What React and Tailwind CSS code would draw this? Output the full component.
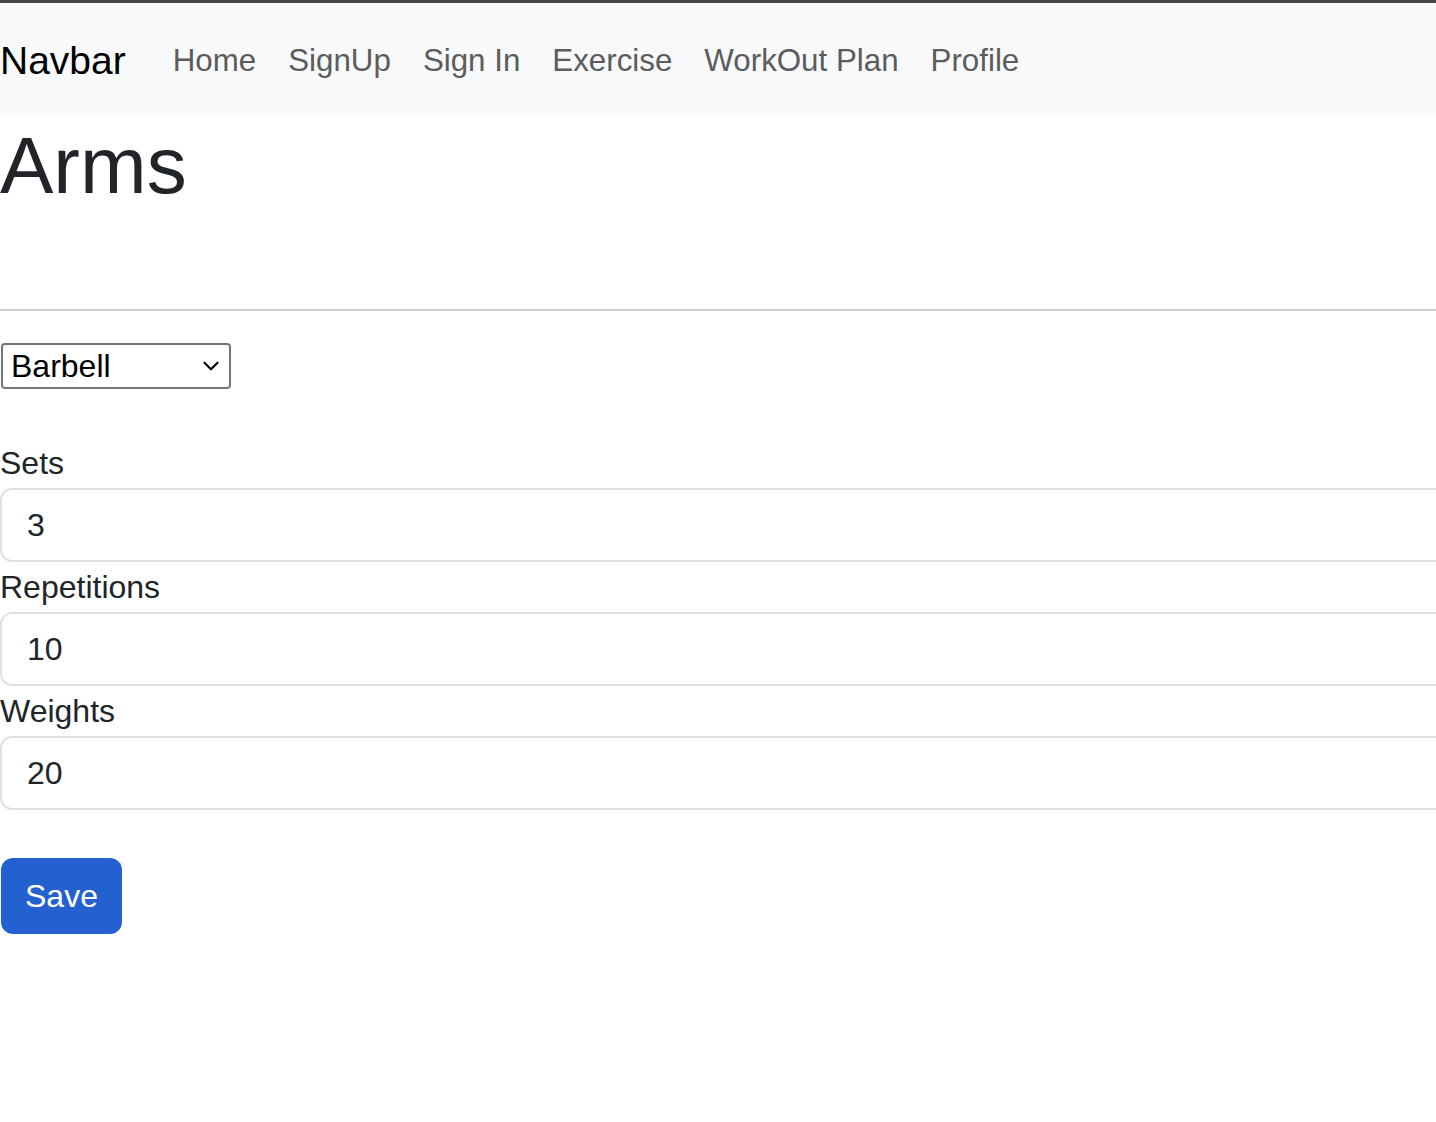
import { ChevronDown } from 'lucide-react';

const links = ['Home', 'SignUp', 'Sign In', 'Exercise', 'WorkOut Plan', 'Profile'];

// ── Labelled number field ──────────────────────────────────────────────────
const Field = ({ label, value }) => (
  <div>
    <label className="block text-[32px] leading-[50px] text-[#212529]">{label}</label>
    <div className="w-[1500px] h-[74px] border-2 border-[#dee2e6] rounded-[12px] bg-white flex items-center pl-[25px] text-[32px] text-[#212529]">
      {value}
    </div>
  </div>
);

export default function App() {
  return (
    <div
      className="w-[1436px] min-h-[1122px] overflow-hidden bg-white"
      style={{ fontFamily: '"Liberation Sans", Arial, sans-serif' }}
    >
      <div className="h-[3px] bg-[#45474a]" />

      {/* Navbar */}
      <nav className="h-[112px] bg-[#f8f9fa] flex items-center pt-[4px]">
        <span className="text-[39px] text-black mr-[31px]">Navbar</span>
        <div className="flex">
          {links.map((l) => (
            <span key={l} className="px-[16px] text-[31.3px] text-[#5c5c5c]">
              {l}
            </span>
          ))}
        </div>
      </nav>

      <h1 className="text-[80px] leading-[96px] font-medium text-[#212529] pt-[3px] mb-[95px]">Arms</h1>

      <hr className="border-0 h-[2px] bg-[#cfcfcf]" />

      {/* Equipment select */}
      <div className="mt-[32px] ml-[1px] w-[230px] h-[46px] border-2 border-[#767676] rounded-[4px] flex items-center justify-between pl-[8px] pr-[5px] text-[32px] text-black">
        <span>Barbell</span>
        <ChevronDown className="w-[26px] h-[26px]" strokeWidth={2} />
      </div>

      <div className="mt-[49px]">
        <Field label="Sets" value="3" />
        <Field label="Repetitions" value="10" />
        <Field label="Weights" value="20" />
      </div>

      <button className="mt-[48px] ml-[1px] h-[76px] px-[24px] rounded-[12px] bg-[#2461d0] text-white text-[32px]">
        Save
      </button>
    </div>
  );
}
